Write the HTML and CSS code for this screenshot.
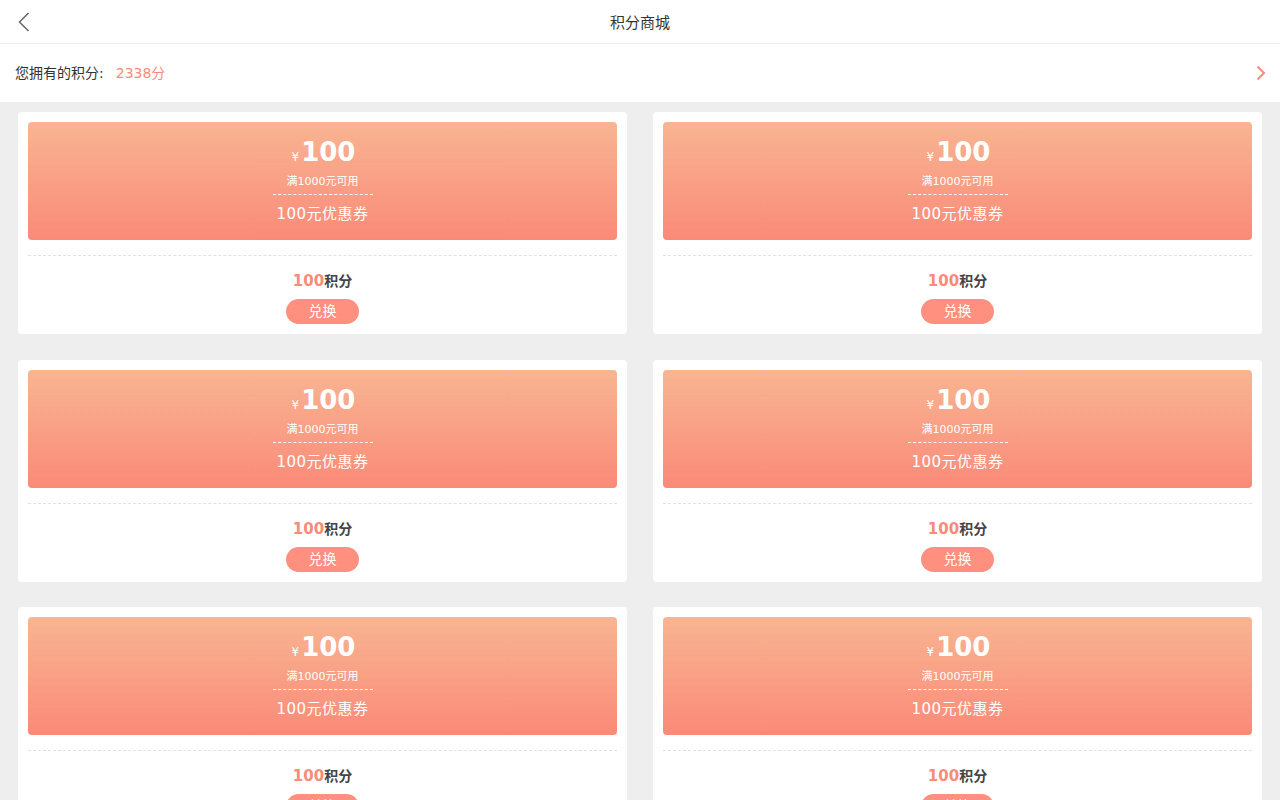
FILE: index.html
```html
<!DOCTYPE html>
<html lang="zh">
<head>
<meta charset="utf-8">
<title>积分商城</title>
<link rel="stylesheet" href="styles.css">
</head>
<body>
<header class="topbar">
  <span class="back">
    <svg width="14" height="22" viewBox="0 0 14 22"><polyline points="11.5,2 2.5,11 11.5,20" fill="none" stroke="#666" stroke-width="1.5"/></svg>
  </span>
  <h1 class="title">积分商城</h1>
</header>
<section class="points">
  <span class="label">您拥有的积分:</span>
  <span class="value">2338分</span>
  <span class="more">
    <svg width="10" height="16" viewBox="0 0 10 16"><polyline points="1.5,1.5 8,8 1.5,14.5" fill="none" stroke="#fa8a7a" stroke-width="2"/></svg>
  </span>
</section>
<main class="grid">
  <div class="card">
    <div class="coupon">
      <div class="amount"><span class="yen">¥</span>100</div>
      <div class="cond">满1000元可用</div>
      <div class="name">100元优惠券</div>
    </div>
    <div class="sep"></div>
    <div class="cost"><span class="num">100</span>积分</div>
    <button class="btn">兑换</button>
  </div>
  <div class="card">
    <div class="coupon">
      <div class="amount"><span class="yen">¥</span>100</div>
      <div class="cond">满1000元可用</div>
      <div class="name">100元优惠券</div>
    </div>
    <div class="sep"></div>
    <div class="cost"><span class="num">100</span>积分</div>
    <button class="btn">兑换</button>
  </div>
  <div class="card">
    <div class="coupon">
      <div class="amount"><span class="yen">¥</span>100</div>
      <div class="cond">满1000元可用</div>
      <div class="name">100元优惠券</div>
    </div>
    <div class="sep"></div>
    <div class="cost"><span class="num">100</span>积分</div>
    <button class="btn">兑换</button>
  </div>
  <div class="card">
    <div class="coupon">
      <div class="amount"><span class="yen">¥</span>100</div>
      <div class="cond">满1000元可用</div>
      <div class="name">100元优惠券</div>
    </div>
    <div class="sep"></div>
    <div class="cost"><span class="num">100</span>积分</div>
    <button class="btn">兑换</button>
  </div>
  <div class="card">
    <div class="coupon">
      <div class="amount"><span class="yen">¥</span>100</div>
      <div class="cond">满1000元可用</div>
      <div class="name">100元优惠券</div>
    </div>
    <div class="sep"></div>
    <div class="cost"><span class="num">100</span>积分</div>
    <button class="btn">兑换</button>
  </div>
  <div class="card">
    <div class="coupon">
      <div class="amount"><span class="yen">¥</span>100</div>
      <div class="cond">满1000元可用</div>
      <div class="name">100元优惠券</div>
    </div>
    <div class="sep"></div>
    <div class="cost"><span class="num">100</span>积分</div>
    <button class="btn">兑换</button>
  </div>
</main>
</body>
</html>
```
FILE: styles.css
```css
* { box-sizing: border-box; }
html, body {
  margin: 0;
  padding: 0;
  background: #eeeeee;
  font-family: "DejaVu Sans", "Noto Sans CJK SC", sans-serif;
  color: #333;
}
.topbar {
  height: 44px;
  background: #fff;
  border-bottom: 1px solid #eaeaea;
  display: flex;
  align-items: center;
  justify-content: center;
  position: relative;
}
.back {
  position: absolute;
  left: 17px;
  top: 11px;
  width: 14px;
  height: 22px;
  display: block;
}
.back svg { display: block; }
.title {
  margin: 0;
  font-size: 15px;
  font-weight: normal;
  color: #333;
}
.points {
  height: 58px;
  background: #fff;
  display: flex;
  align-items: center;
  padding: 0 15px 3px;
  font-size: 14px;
}
.label { color: #333; }
.value { color: #fa8a7a; margin-left: 12px; }
.more { margin-left: auto; display: block; height: 16px; margin-right: -1px; margin-top: 3px; }
.more svg { display: block; }
.grid {
  display: grid;
  grid-template-columns: 1fr 1fr;
  column-gap: 26px;
  row-gap: 25.5px;
  padding: 10px 18px;
}
.card {
  background: #fff;
  border-radius: 4px;
  padding: 10px 10px 10px;
  display: flex;
  flex-direction: column;
  align-items: center;
}
.coupon {
  width: 100%;
  height: 118px;
  border-radius: 4px;
  background: linear-gradient(to bottom, #f8b592, #fa8a78);
  color: #fff;
  display: flex;
  flex-direction: column;
  align-items: center;
  padding-top: 15px;
}
.amount {
  font-size: 26px;
  font-weight: bold;
  line-height: 30px;
  height: 30px;
  padding-left: 2px;
}
.yen {
  font-size: 12px;
  font-weight: normal;
  margin-right: 2px;
}
.cond {
  margin-top: 7px;
  font-size: 11px;
  line-height: 16px;
  width: 100px;
  text-align: center;
  padding-bottom: 4px;
  border-bottom: 1px dashed #fff;
}
.name {
  margin-top: 9px;
  font-size: 15px;
  line-height: 20px;
  letter-spacing: 0.5px;
}
.sep {
  width: 100%;
  margin-top: 15px;
  border-top: 1px dashed #e2e2e2;
}
.cost {
  margin-top: 15px;
  font-size: 14px;
  line-height: 20px;
  font-weight: bold;
  color: #444;
}
.num { color: #fa8a7a; font-size: 15px; }
.btn {
  margin-top: 8px;
  width: 73px;
  height: 25px;
  border: none;
  border-radius: 13px;
  background: #ff8f7e;
  color: #fff;
  font-family: "DejaVu Sans", "Noto Sans CJK SC", sans-serif;
  font-size: 14px;
  padding: 0;
  line-height: 25px;
}
```
